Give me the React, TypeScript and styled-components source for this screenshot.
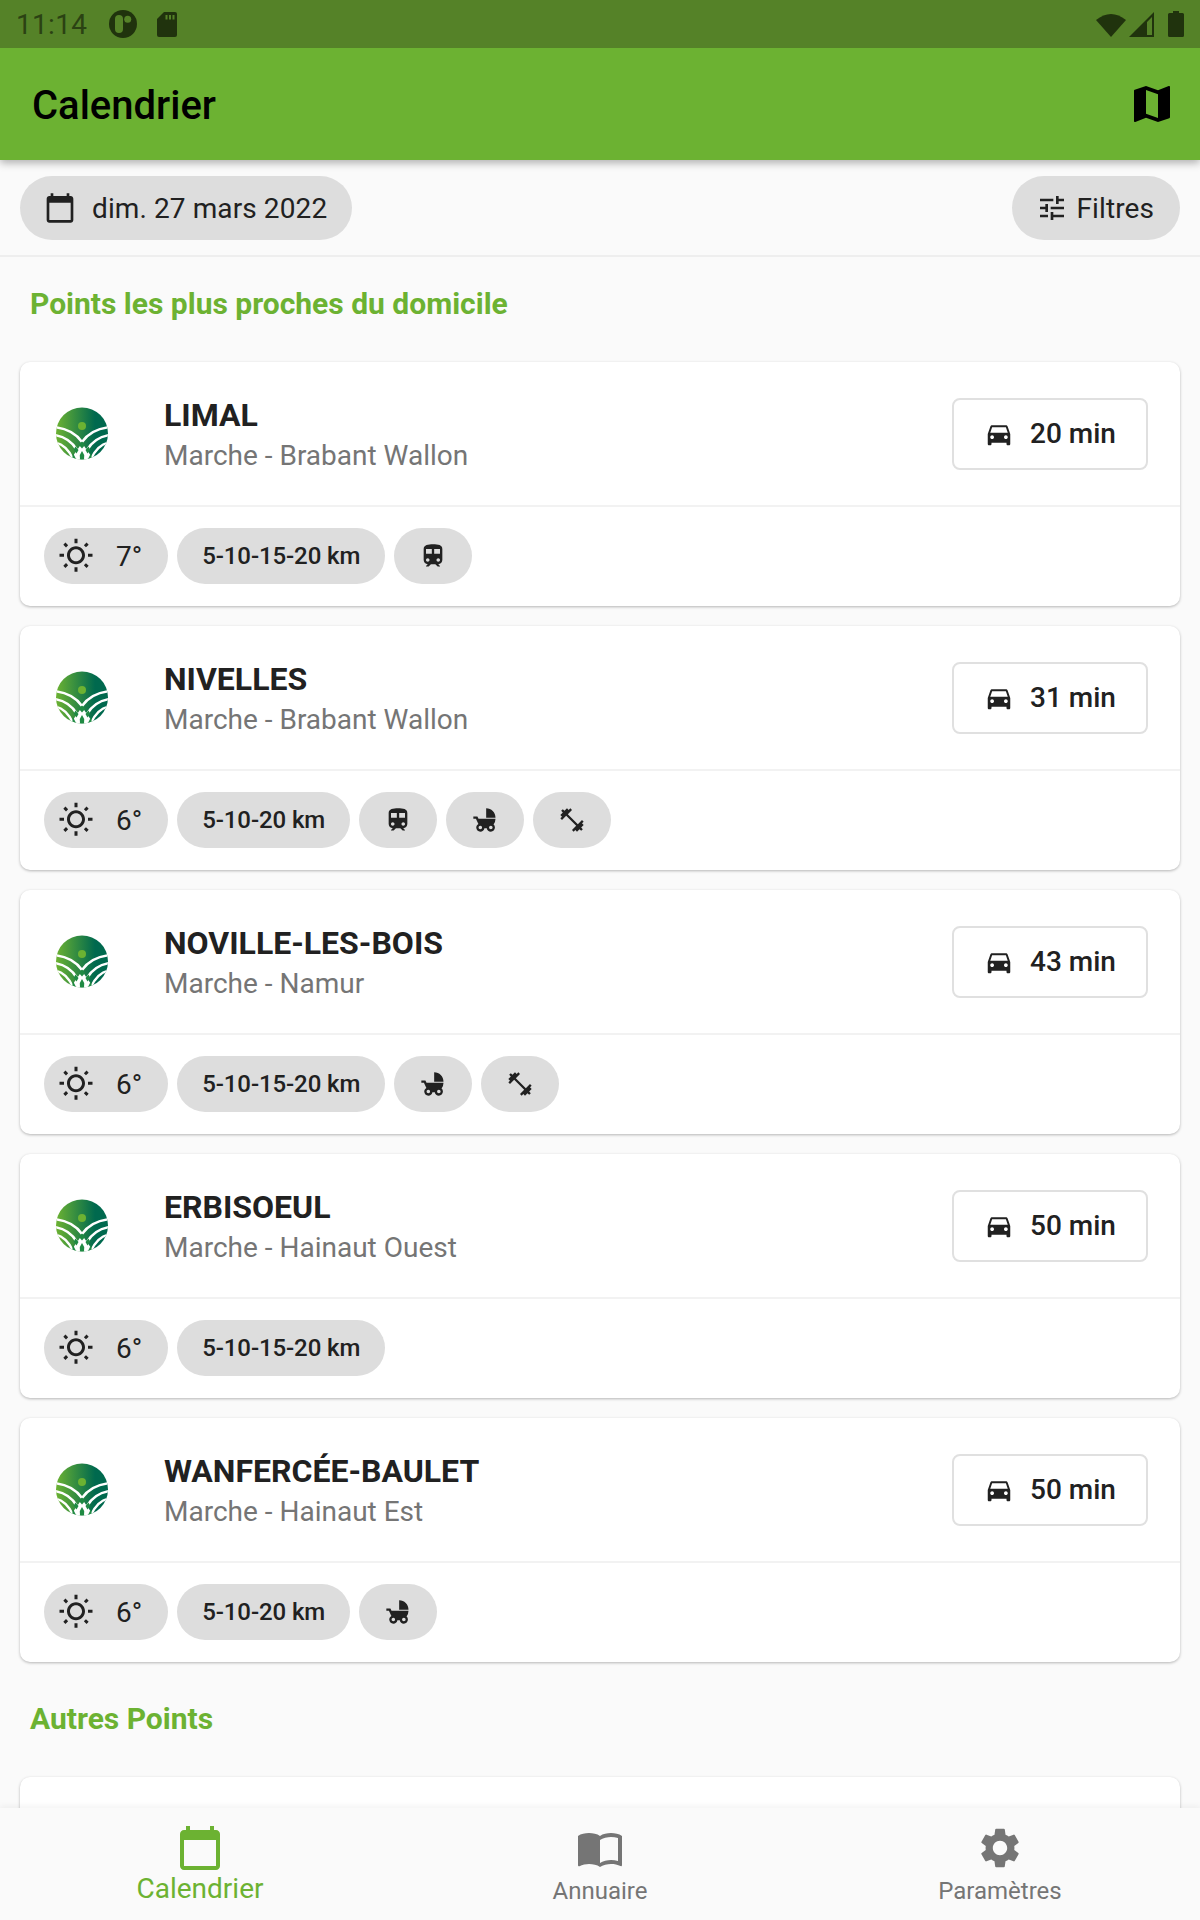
import { ReactNode } from "react"
import styled, { createGlobalStyle } from "styled-components"
import {
  MdCalendarToday,
  MdMap,
  MdTune,
  MdDirectionsCar,
  MdTrain,
  MdChildFriendly,
  MdFitnessCenter,
  MdOutlineWbSunny,
  MdImportContacts,
  MdSettings,
} from "react-icons/md"

const GREEN = "#6cb232"
const STATUS_INK = "#20330d"

type Extra = "train" | "stroller" | "gym"

type Point = {
  name: string
  region: string
  minutes: number
  temp: number
  km: string
  extras: Extra[]
}

const points: Point[] = [
  { name: "LIMAL", region: "Marche - Brabant Wallon", minutes: 20, temp: 7, km: "5-10-15-20 km", extras: ["train"] },
  { name: "NIVELLES", region: "Marche - Brabant Wallon", minutes: 31, temp: 6, km: "5-10-20 km", extras: ["train", "stroller", "gym"] },
  { name: "NOVILLE-LES-BOIS", region: "Marche - Namur", minutes: 43, temp: 6, km: "5-10-15-20 km", extras: ["stroller", "gym"] },
  { name: "ERBISOEUL", region: "Marche - Hainaut Ouest", minutes: 50, temp: 6, km: "5-10-15-20 km", extras: [] },
  { name: "WANFERCÉE-BAULET", region: "Marche - Hainaut Est", minutes: 50, temp: 6, km: "5-10-20 km", extras: ["stroller"] },
]

const extraIcons: Record<Extra, ReactNode> = {
  train: <MdTrain size={28} />,
  stroller: <MdChildFriendly size={28} />,
  gym: <MdFitnessCenter size={28} />,
}

const Logo = () => (
  <LogoSvg viewBox="0 0 52 53">
    <defs>
      <linearGradient id="adeps-logo" x1="0" x2="1" y1="0" y2="0">
        <stop offset="0" stopColor="#6cb232" />
        <stop offset="0.75" stopColor="#00694e" />
      </linearGradient>
      <clipPath id="adeps-round">
        <circle cx="26" cy="26.5" r="26" />
      </clipPath>
    </defs>
    <g clipPath="url(#adeps-round)">
      <rect width="52" height="53" fill="url(#adeps-logo)" />
      <circle cx="26" cy="19" r="4" fill="#6cb232" />
      <path d="M26 36 L12 56 H40 Z" fill="#fff" />
      <g fill="none" stroke="#fff" strokeWidth="2.4">
        <path d="M-2 20 Q17 22 26 35" />
        <path d="M54 20 Q35 22 26 35" />
        <path d="M-2 28 Q13 30 21 43" />
        <path d="M54 28 Q39 30 31 43" />
        <path d="M-2 35.5 Q10 37 17 52" />
        <path d="M54 35.5 Q42 37 35 52" />
      </g>
      <g fill="#1f8a43">
        <path d="M26 34.5 L29 38 L26 41.5 L23 38 Z" />
        <path d="M19.5 39.5 L22.5 43 L20.5 46.5 L17.8 42.5 Z" />
        <path d="M32.5 39.5 L34.2 42.5 L31.5 46.5 L29.5 43 Z" />
        <path d="M17 46 L20 52 L16 53 Z" />
        <path d="M26 44 L28.2 48 L28 53 H24 L23.8 48 Z" />
        <path d="M35 46 L36 53 L32 52 Z" />
      </g>
    </g>
  </LogoSvg>
)

const StatusIcons = () => (
  <StatusRight>
    <svg width="30" height="25" viewBox="0 0 30 25">
      <path d="M15 25 L0 8 Q15 -4 30 8 Z" fill={STATUS_INK} />
    </svg>
    <svg width="25" height="25" viewBox="0 0 25 25">
      <path d="M0 25 L25 0 V25 Z M18 23 H23 V5 L18 10 Z" fill={STATUS_INK} fillRule="evenodd" />
    </svg>
    <BatteryIcon width="16" height="26" viewBox="0 0 16 26">
      <path d="M5 0 H11 V2 H14.5 Q16 2 16 3.5 V24.5 Q16 26 14.5 26 H1.5 Q0 26 0 24.5 V3.5 Q0 2 1.5 2 H5 Z" fill={STATUS_INK} />
    </BatteryIcon>
  </StatusRight>
)

const PointCard = ({ point }: { point: Point }) => (
  <Card>
    <CardHead>
      <Logo />
      <CardTitles>
        <PointName>{point.name}</PointName>
        <Region>{point.region}</Region>
      </CardTitles>
      <TravelTime>
        <MdDirectionsCar size={30} />
        {point.minutes} min
      </TravelTime>
    </CardHead>
    <CardFoot>
      <Pill>
        <SunIcon size={36} />
        <Temp>{point.temp}°</Temp>
      </Pill>
      <Pill>{point.km}</Pill>
      {point.extras.map(extra => (
        <Pill key={extra}>{extraIcons[extra]}</Pill>
      ))}
    </CardFoot>
  </Card>
)

export default function App() {
  return (
    <Page>
      <GlobalStyle />
      <StatusBar>
        <StatusLeft>
          <Clock>11:14</Clock>
          <svg width="28" height="28" viewBox="0 0 28 28">
            <circle cx="14" cy="14" r="14" fill={STATUS_INK} />
            <rect x="6" y="5" width="8" height="18" rx="4" fill="#558228" />
            <circle cx="18.7" cy="9.3" r="3.5" fill="#558228" />
          </svg>
          <SdIcon width="20" height="25" viewBox="0 0 20 25">
            <path d="M7 0 H18 Q20 0 20 2 V23 Q20 25 18 25 H2 Q0 25 0 23 V7 Z" fill={STATUS_INK} />
            <path d="M8.5 3 H10.5 V7.5 H8.5 Z M12 3 H14 V7.5 H12 Z M15.5 3 H17.5 V7.5 H15.5 Z" fill="#558228" />
          </SdIcon>
        </StatusLeft>
        <StatusIcons />
      </StatusBar>
      <AppBar>
        <AppTitle>Calendrier</AppTitle>
        <MdMap size={48} />
      </AppBar>
      <Content>
        <FilterRow>
          <DateChip>
            <MdCalendarToday size={32} />
            dim. 27 mars 2022
          </DateChip>
          <FilterChip>
            <MdTune size={32} />
            Filtres
          </FilterChip>
        </FilterRow>
        <SectionTitle>Points les plus proches du domicile</SectionTitle>
        <CardList>
          {points.map(point => (
            <PointCard key={point.name} point={point} />
          ))}
        </CardList>
        <SectionTitle>Autres Points</SectionTitle>
        <CardList>
          <Card />
        </CardList>
      </Content>
      <BottomNav>
        <NavItem $active>
          <MdCalendarToday size={48} />
          <NavLabel $active>Calendrier</NavLabel>
        </NavItem>
        <NavItem>
          <MdImportContacts size={48} />
          <NavLabel>Annuaire</NavLabel>
        </NavItem>
        <NavItem>
          <MdSettings size={48} />
          <NavLabel>Paramètres</NavLabel>
        </NavItem>
      </BottomNav>
    </Page>
  )
}

const GlobalStyle = createGlobalStyle`
  html, body {
    margin: 0;
    padding: 0;
    background: #fafafa;
  }
  * {
    box-sizing: border-box;
  }
  body {
    font-family: Roboto, "Liberation Sans", sans-serif;
    color: #212121;
  }
`

const Page = styled.div`
  width: 1200px;
  height: 1920px;
  display: flex;
  flex-direction: column;
  overflow: hidden;
  background: #fafafa;
`

const StatusBar = styled.div`
  height: 48px;
  flex-shrink: 0;
  background: #558228;
  display: flex;
  align-items: center;
  justify-content: space-between;
  padding: 0 16px;
  position: relative;
  z-index: 3;
`

const StatusLeft = styled.div`
  display: flex;
  align-items: center;
`

const Clock = styled.span`
  font-size: 28px;
  letter-spacing: 0.3px;
  color: #2b4213;
  margin-right: 22px;
`

const SdIcon = styled.svg`
  margin-left: 20px;
`

const StatusRight = styled.div`
  display: flex;
  align-items: center;
  gap: 3px;
`

const BatteryIcon = styled.svg`
  margin-left: 11px;
`

const AppBar = styled.header`
  height: 112px;
  flex-shrink: 0;
  background: ${GREEN};
  color: #000;
  display: flex;
  align-items: center;
  justify-content: space-between;
  padding: 0 24px 0 32px;
  box-shadow: 0 3px 8px rgba(0, 0, 0, 0.3);
  position: relative;
  z-index: 2;
`

const AppTitle = styled.h1`
  margin: 0;
  padding-top: 3px;
  font-size: 40px;
  font-weight: 500;
`

const Content = styled.main`
  flex: 1;
  min-height: 0;
  overflow: hidden;
`

const FilterRow = styled.div`
  display: flex;
  justify-content: space-between;
  padding: 16px 20px 15px;
  border-bottom: 2px solid #eeeeee;
`

const Chip = styled.div`
  height: 64px;
  border-radius: 32px;
  background: #dddddd;
  display: flex;
  align-items: center;
  font-size: 28px;
  letter-spacing: 0.1px;
  color: #212121;
`

const DateChip = styled(Chip)`
  gap: 16px;
  padding: 0 25px 0 24px;
`

const FilterChip = styled(Chip)`
  gap: 9px;
  padding: 0 26px 0 24px;
`

const SectionTitle = styled.h2`
  margin: 0;
  padding: 29px 30px 40px;
  font-size: 30px;
  line-height: 36px;
  font-weight: 700;
  color: ${GREEN};
`

const CardList = styled.div`
  display: flex;
  flex-direction: column;
  gap: 20px;
  padding: 0 20px;
  margin-bottom: 10px;
`

const Card = styled.article`
  height: 244px;
  background: #fff;
  border-radius: 10px;
  box-shadow: 0 1px 3px rgba(0, 0, 0, 0.28);
  display: flex;
  flex-direction: column;
`

const CardHead = styled.div`
  height: 145px;
  flex-shrink: 0;
  display: flex;
  align-items: center;
  padding: 0 32px 0 36px;
  border-bottom: 2px solid #f2f2f2;
`

const LogoSvg = styled.svg`
  width: 52px;
  height: 53px;
  flex-shrink: 0;
  margin-right: 56px;
`

const CardTitles = styled.div`
  flex: 1;
  min-width: 0;
  padding-top: 5px;
`

const PointName = styled.div`
  font-size: 32px;
  line-height: 40px;
  font-weight: 700;
  color: #212121;
`

const Region = styled.div`
  font-size: 28px;
  line-height: 42px;
  color: #757575;
`

const TravelTime = styled.div`
  width: 196px;
  height: 72px;
  border: 2px solid #e0e0e0;
  border-radius: 8px;
  display: flex;
  align-items: center;
  justify-content: center;
  gap: 16px;
  font-size: 28px;
  font-weight: 500;
  color: #212121;
`

const CardFoot = styled.div`
  flex: 1;
  display: flex;
  align-items: center;
  gap: 9px;
  padding: 0 24px 1px;
`

const Pill = styled.div`
  height: 56px;
  border-radius: 28px;
  background: #dddddd;
  padding: 0 25px;
  display: flex;
  align-items: center;
  font-size: 24px;
  font-weight: 500;
  letter-spacing: -0.1px;
  color: #212121;
`

const SunIcon = styled(MdOutlineWbSunny)`
  margin-left: -11px;
`

const Temp = styled.span`
  font-size: 28px;
  font-weight: 400;
  letter-spacing: 0;
  margin: 0 1px 0 22px;
`

const BottomNav = styled.nav`
  height: 112px;
  flex-shrink: 0;
  background: #fafafa;
  display: grid;
  grid-template-columns: repeat(3, 1fr);
  box-shadow: 0 -2px 6px rgba(0, 0, 0, 0.05);
  position: relative;
  z-index: 2;
`

const NavItem = styled.div<{ $active?: boolean }>`
  display: flex;
  flex-direction: column;
  align-items: center;
  padding-top: 16px;
  color: ${p => (p.$active ? GREEN : "#757575")};
`

const NavLabel = styled.span<{ $active?: boolean }>`
  font-size: ${p => (p.$active ? 28 : 24)}px;
  line-height: ${p => (p.$active ? 34 : 38)}px;
`
